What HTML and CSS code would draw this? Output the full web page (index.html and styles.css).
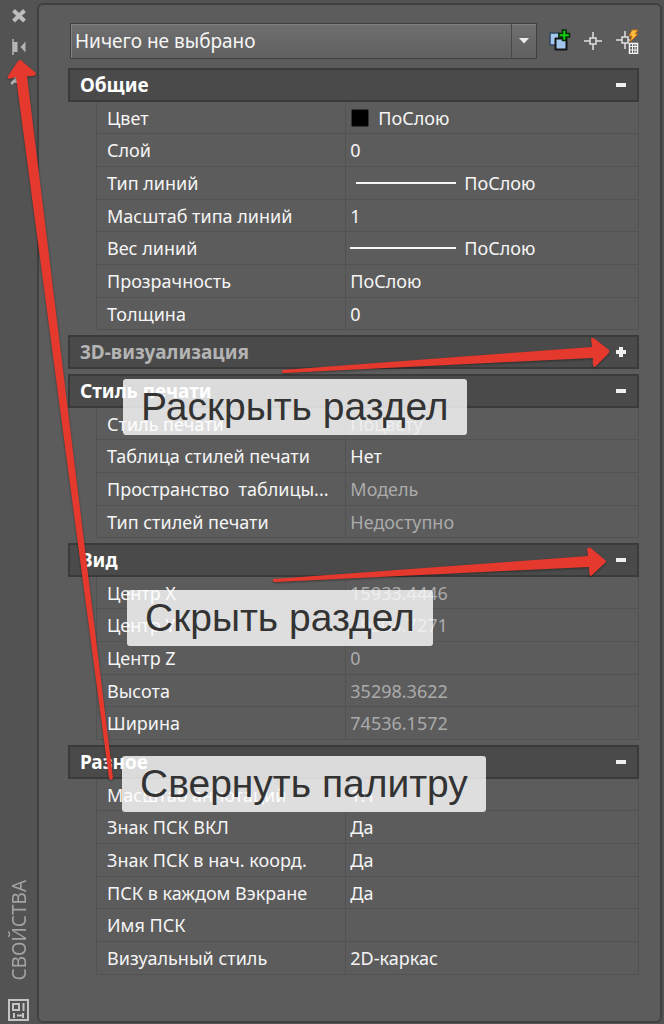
FILE: index.html
```html
<!DOCTYPE html>
<html lang="ru">
<head>
<meta charset="utf-8">
<meta name="viewport" content="width=device-width, initial-scale=1">
<title>Свойства</title>
<link rel="stylesheet" href="styles.css">
</head>
<body>
<div class="palette">
  <aside class="rail">
    <div class="rail-buttons">
      <button class="rail-button" type="button" aria-label="Закрыть">
        <svg width="16" height="16" viewBox="0 0 16 16"><path d="M2.500 2.500L13.500 13M13.500 2.500L2.500 13" stroke="#bdbdbd" stroke-width="4"/></svg>
      </button>
      <button class="rail-button" type="button" aria-label="Свернуть палитру">
        <svg width="16" height="16" viewBox="0 0 16 16"><path d="M2 0v16" stroke="#b4b4b4" stroke-width="1.500"/><path d="M2 3h4.500v10H2zM14.500 2.500v11L9.500 8z" fill="#b4b4b4"/></svg>
      </button>
      <button class="rail-button" type="button" aria-label="Параметры">
        <svg width="16" height="16" viewBox="0 0 16 16"><path d="M0 14l5-5M1 4l4 4M5 5v8M5 9h4" stroke="#b4b4b4" stroke-width="2.500" fill="none"/></svg>
      </button>
    </div>
    <div class="rail-foot">
      <span class="rail-title">СВОЙСТВА</span>
      <svg width="21" height="22" viewBox="0 0 21 22" fill="none" stroke="#c4c4c4"><path d="M1 1h19v20H1z" stroke-width="2"/><path d="M5 5h6v6H5z" stroke-width="2"/><path d="M15.500 4v8M5 16.500h2M9 16.500h7M6 14v5M15 14v5" stroke-width="2"/></svg>
    </div>
  </aside>
  <main class="panel">
    <div class="toolbar">
      <div class="picker">
        <select class="picker-select" aria-label="Выбор объектов"><option>Ничего не выбрано</option></select>
        <span class="picker-arrow"><svg width="10" height="6" viewBox="0 0 10 6"><path d="M0 0h10L5 5.500z" fill="#ededed"/></svg></span>
      </div>
      <div class="tools">
        <button class="tool" type="button" aria-label="Добавить к выбору">
          <svg width="24" height="26" viewBox="0 0 24 26"><path d="M3 5h9v12H3z" fill="#a3c6ef" stroke="#33465e" stroke-width="1.500" stroke-linejoin="round"/><path d="M8.500 10.500h11v11h-11z" fill="#a3c6ef" stroke="#151515" stroke-width="2" stroke-linejoin="round"/><path d="M15.500 2h3.500v3.500h3.500V9H19v3.500h-3.500V9H12V5.500h3.500z" fill="#16cc16" stroke="#062c06" stroke-width="1.500"/></svg>
        </button>
        <button class="tool" type="button" aria-label="Выбрать объекты">
          <svg width="20" height="20" viewBox="0 0 20 20" fill="none" stroke="#e0e0e0" stroke-width="1.500"><path d="M7 7h6v6H7zM10 1v6M10 13v6M1 10h6M13 10h6"/></svg>
        </button>
        <button class="tool" type="button" aria-label="Быстрый выбор">
          <svg width="24" height="26" viewBox="0 0 24 26"><path d="M7 9h6v6H7zM10 3v6M10 15v6M1 12h6M13 12h2" fill="none" stroke="#e0e0e0" stroke-width="1.500"/><path d="M17 2h6l-3 4h3l-8 8 2-6h-3z" fill="#ffc042" stroke="#c76a10"/><path d="M14.500 15.500h8v10h-8z" fill="#555" stroke="#f4f4f4" stroke-width="1.500"/><path d="M14 18.500h9M14 22h9M17.500 15v11M20 15v11" stroke="#f4f4f4"/></svg>
        </button>
      </div>
    </div>

    <section class="group">
      <h2 class="group-head"><button class="group-toggle" type="button" aria-expanded="true">Общие<span class="sign"></span></button></h2>
      <table class="props">
        <tr><th scope="row">Цвет</th><td><span class="value"><span class="swatch"></span>ПоСлою</span></td></tr>
        <tr><th scope="row">Слой</th><td>0</td></tr>
        <tr><th scope="row">Тип линий</th><td><span class="value"><span class="line line-type"></span>ПоСлою</span></td></tr>
        <tr><th scope="row">Масштаб типа линий</th><td>1</td></tr>
        <tr><th scope="row">Вес линий</th><td><span class="value"><span class="line line-weight"></span>ПоСлою</span></td></tr>
        <tr><th scope="row">Прозрачность</th><td>ПоСлою</td></tr>
        <tr><th scope="row">Толщина</th><td>0</td></tr>
      </table>
    </section>

    <section class="group">
      <h2 class="group-head"><button class="group-toggle is-closed" type="button" aria-expanded="false">3D-визуализация<span class="sign"></span></button></h2>
    </section>

    <section class="group">
      <h2 class="group-head"><button class="group-toggle" type="button" aria-expanded="true">Стиль печати<span class="sign"></span></button></h2>
      <table class="props">
        <tr><th scope="row">Стиль печати</th><td class="muted">Поцвету</td></tr>
        <tr><th scope="row">Таблица стилей печати</th><td>Нет</td></tr>
        <tr><th scope="row">Пространство&nbsp; таблицы...</th><td class="muted">Модель</td></tr>
        <tr><th scope="row">Тип стилей печати</th><td class="muted">Недоступно</td></tr>
      </table>
    </section>

    <section class="group">
      <h2 class="group-head"><button class="group-toggle" type="button" aria-expanded="true">Вид<span class="sign"></span></button></h2>
      <table class="props">
        <tr><th scope="row">Центр X</th><td class="muted">15933.4446</td></tr>
        <tr><th scope="row">Центр Y</th><td class="muted">19304.7271</td></tr>
        <tr><th scope="row">Центр Z</th><td class="muted">0</td></tr>
        <tr><th scope="row">Высота</th><td class="muted">35298.3622</td></tr>
        <tr><th scope="row">Ширина</th><td class="muted">74536.1572</td></tr>
      </table>
    </section>

    <section class="group">
      <h2 class="group-head"><button class="group-toggle" type="button" aria-expanded="true">Разное<span class="sign"></span></button></h2>
      <table class="props">
        <tr><th scope="row">Масштаб аннотаций</th><td>1:1</td></tr>
        <tr><th scope="row">Знак ПСК ВКЛ</th><td>Да</td></tr>
        <tr><th scope="row">Знак ПСК в нач. коорд.</th><td>Да</td></tr>
        <tr><th scope="row">ПСК в каждом Вэкране</th><td>Да</td></tr>
        <tr><th scope="row">Имя ПСК</th><td></td></tr>
        <tr><th scope="row">Визуальный стиль</th><td>2D-каркас</td></tr>
      </table>
    </section>
  </main>

  <span class="note note-open">Раскрыть раздел</span>
  <span class="note note-hide">Скрыть раздел</span>
  <span class="note note-fold">Свернуть палитру</span>
  <svg class="arrows" width="664" height="1024" viewBox="0 0 664 1024" fill="#e6392e" aria-hidden="true">
    <path d="M20 60Q22 60 23 62L36 73Q36 77 27 76L113 778Q111 782 109 778L16 77L9 79Q7 78 8 76L18 61Z"/>
    <path d="M282 370L592 347L591 339Q592 337 595 339L609 350Q610 352 608 354L595 367Q592 367 593 358L284 373Q281 373 282 370Z"/>
    <path d="M273 579L588 556L587 549Q589 546 592 549L605 560Q607 561 605 563L591 576Q589 577 589 567L275 582Q272 582 273 579Z"/>
  </svg>
</div>
</body>
</html>
```
FILE: styles.css
```css
* {
  box-sizing: border-box;
}

body {
  margin: 0;
  background: #535353;
  color: #f5f5f5;
  font: 18px/24px "Noto Sans", "Open Sans", sans-serif;
}

button {
  padding: 0;
  border: 0;
  background: none;
  color: inherit;
  font: inherit;
}

svg {
  display: block;
}

.palette {
  position: relative;
  display: flex;
  min-height: 100vh;
  padding: 3px 2px 1px 0;
  overflow: hidden;
}

.rail {
  display: flex;
  flex-direction: column;
  justify-content: space-between;
  align-items: center;
  flex: none;
  width: 37px;
  padding: 5px 0 2px;
}

.rail-buttons {
  display: flex;
  flex-direction: column;
  gap: 15px;
}

.rail-foot {
  display: flex;
  flex-direction: column;
  align-items: center;
  gap: 18px;
}

.rail-title {
  writing-mode: vertical-rl;
  transform: rotate(180deg);
  color: #a3a3a3;
  font-size: 19px;
}

.panel {
  flex: 1;
  min-width: 0;
  padding: 18px 21px 30px 29px;
  border: 2px solid #404040;
  border-radius: 6px;
  background: #5c5c5c;
}

.toolbar {
  display: flex;
  align-items: center;
  gap: 10px;
  margin: 0 0 9px 2px;
}

.picker {
  display: flex;
  flex: 1;
  height: 36px;
  border: 1px solid #404040;
  background: linear-gradient(#6f6f6f, #606060);
  box-shadow: inset 1px 1px #808080;
}

.picker-select {
  flex: 1;
  min-width: 0;
  padding: 0 4px;
  border: 0;
  background: none;
  color: inherit;
  font: inherit;
  font-size: 19px;
  appearance: none;
}

.picker-arrow {
  display: flex;
  align-items: center;
  justify-content: center;
  width: 25px;
  border-left: 1px solid #484848;
}

.tools {
  display: flex;
  align-items: center;
  gap: 12px;
}

.group {
  margin-bottom: 5px;
}

.group-head {
  margin: 0;
  font: inherit;
}

.group-toggle {
  display: flex;
  align-items: center;
  justify-content: space-between;
  width: 100%;
  height: 34px;
  padding: 0 11px 0 10px;
  border: 2px solid #3a3a3a;
  background: #4a4a4a;
  color: #ffffff;
  font-size: 19px;
  font-weight: 700;
}

.group-toggle.is-closed {
  color: #b4b4b4;
}

.sign {
  width: 10px;
  height: 10px;
  background: linear-gradient(#f0f0f0, #f0f0f0) center / 10px 4px no-repeat;
}

.is-closed .sign {
  background:
    linear-gradient(#f0f0f0, #f0f0f0) center / 10px 4px no-repeat,
    linear-gradient(#f0f0f0, #f0f0f0) center / 4px 10px no-repeat;
}

.props {
  width: calc(100% - 28px);
  margin-left: 28px;
  border-left: 1px solid #525252;
  border-spacing: 0;
  table-layout: fixed;
}

.props th,
.props td {
  height: 33px;
  padding: 0 4px;
  border-right: 1px solid #525252;
  border-bottom: 1px solid #525252;
  font-weight: 400;
  text-align: left;
  white-space: nowrap;
}

.props tr:nth-child(3n + 1) > * {
  height: 32px;
}

.props th {
  width: 46%;
  padding-left: 10px;
}

.props .muted {
  color: #ababab;
}

.value {
  display: flex;
  align-items: center;
  gap: 8px;
}

.swatch {
  width: 18px;
  height: 18px;
  margin: 0 1px;
  border: 1px solid #333333;
  border-radius: 2px;
  background: #000000;
}

.line {
  height: 2px;
  background: #f5f5f5;
}

.line-type {
  width: 100px;
  margin-left: 6px;
}

.line-weight {
  width: 106px;
}

.note {
  position: absolute;
  padding: 4px 18px;
  border-radius: 3px;
  background: rgba(255, 255, 255, 0.8);
  color: #333333;
  font: 39px/48px "Liberation Sans", Arial, sans-serif;
  white-space: nowrap;
}

.note-open {
  top: 379px;
  left: 123px;
}

.note-hide {
  top: 590px;
  left: 127px;
}

.note-fold {
  top: 756px;
  left: 122px;
}

.arrows {
  position: absolute;
  top: 0;
  left: 0;
  filter: drop-shadow(0 1px 1px rgba(0, 0, 0, 0.4));
  pointer-events: none;
}
```
